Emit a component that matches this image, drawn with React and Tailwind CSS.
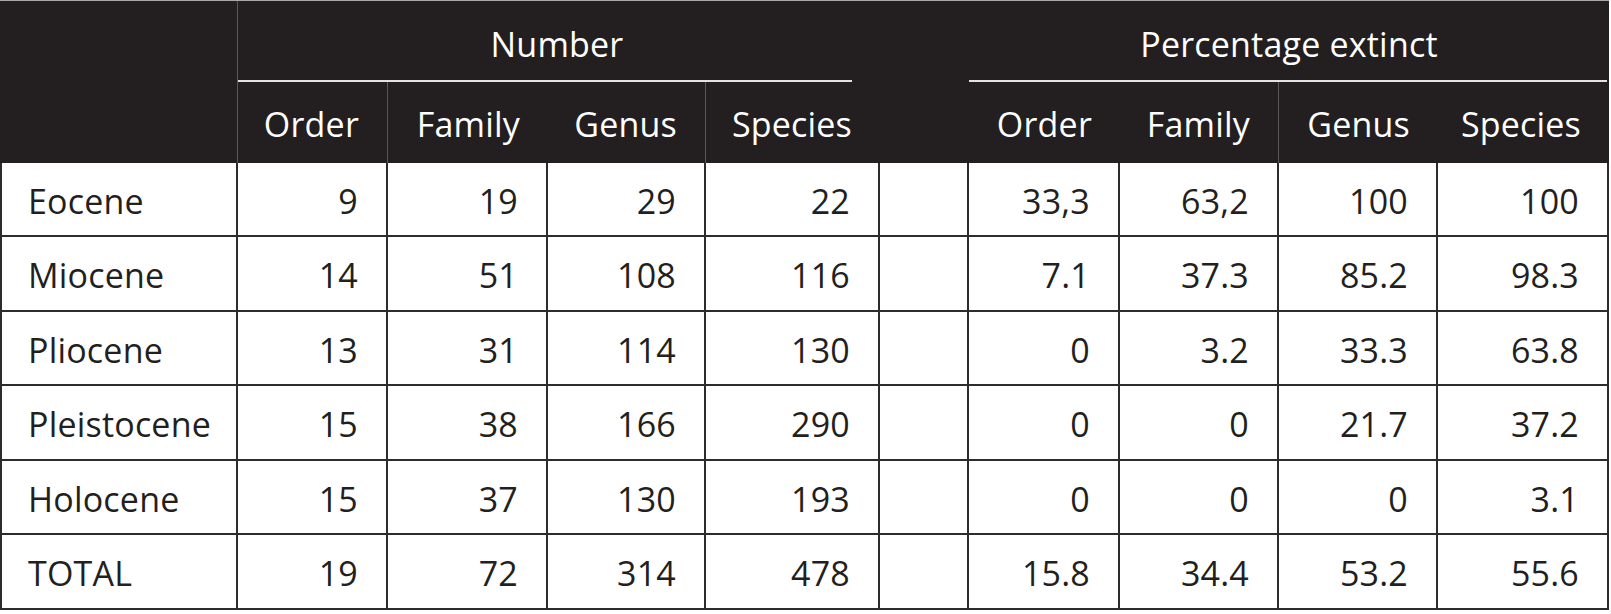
const ROWS = [
  ["Eocene", "9", "19", "29", "22", "33,3", "63,2", "100", "100"],
  ["Miocene", "14", "51", "108", "116", "7.1", "37.3", "85.2", "98.3"],
  ["Pliocene", "13", "31", "114", "130", "0", "3.2", "33.3", "63.8"],
  ["Pleistocene", "15", "38", "166", "290", "0", "0", "21.7", "37.2"],
  ["Holocene", "15", "37", "130", "193", "0", "0", "0", "3.1"],
  ["TOTAL", "19", "72", "314", "478", "15.8", "34.4", "53.2", "55.6"],
];

const SUB = [
  { label: "Order", line: true },
  { label: "Family", line: false },
  { label: "Genus", line: true },
  { label: "Species", line: false },
];

const SUB_PCT = [
  { label: "Order", line: false },
  { label: "Family", line: true },
  { label: "Genus", line: false },
  { label: "Species", line: false },
];

function SubHead({ label, line }) {
  return (
    <div className={`flex items-center justify-end pr-[28px] pt-[3px] ${line ? "border-r border-[#5a5758]" : ""}`}>
      {label}
    </div>
  );
}

function Cell({ children, first, left }) {
  return (
    <div
      className={`flex items-center border-r-2 border-b-2 border-[#2e2b2c] pt-[3px] ${first ? "border-l-2" : ""} ${left ? "justify-start pl-[26px]" : "justify-end pr-[28px]"}`}
    >
      {children}
    </div>
  );
}

export default function App() {
  return (
    <div className="w-[1611px] h-[614px] bg-white font-['Open_Sans',sans-serif] text-[34px] tracking-[0.2px] leading-none text-[#231f20]">
      <div className="w-[1609px] border-t border-[#a8a8a8] grid grid-cols-[238px_150px_160px_158px_174px_89px_151px_159px_159px_171px] grid-rows-[81px_81px_74px_75px_74px_75px_74px_75px]">
        {/* header */}
        <div className="row-span-2 bg-[#231f20] border-r border-[#5a5758]" />
        <div className="col-span-4 bg-[#231f20] text-white flex flex-col">
          <div className="flex-1 flex items-center justify-center pt-[7px] pr-[4px]">Number</div>
          <div className="h-[2px] bg-[#e2e2e2] mr-[28px]" />
        </div>
        <div className="row-span-2 bg-[#231f20]" />
        <div className="col-span-4 bg-[#231f20] text-white flex flex-col">
          <div className="flex-1 flex items-center justify-center pt-[7px]">Percentage extinct</div>
          <div className="h-[2px] bg-[#e2e2e2] mr-[2px]" />
        </div>
        {SUB.map((s) => (
          <div key={"n" + s.label} className="bg-[#231f20] text-white grid">
            <SubHead {...s} />
          </div>
        ))}
        {SUB_PCT.map((s) => (
          <div key={"p" + s.label} className="bg-[#231f20] text-white grid">
            <SubHead {...s} />
          </div>
        ))}

        {/* body */}
        {ROWS.map((r) => [
          <Cell key={r[0] + "0"} first left>{r[0]}</Cell>,
          <Cell key={r[0] + "1"}>{r[1]}</Cell>,
          <Cell key={r[0] + "2"}>{r[2]}</Cell>,
          <Cell key={r[0] + "3"}>{r[3]}</Cell>,
          <Cell key={r[0] + "4"}>{r[4]}</Cell>,
          <Cell key={r[0] + "s"} />,
          <Cell key={r[0] + "5"}>{r[5]}</Cell>,
          <Cell key={r[0] + "6"}>{r[6]}</Cell>,
          <Cell key={r[0] + "7"}>{r[7]}</Cell>,
          <Cell key={r[0] + "8"}>{r[8]}</Cell>,
        ])}
      </div>
    </div>
  );
}
